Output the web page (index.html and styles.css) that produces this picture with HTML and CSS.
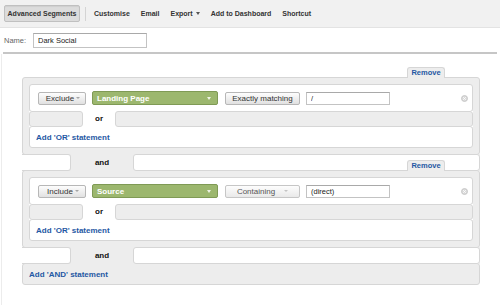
FILE: index.html
```html
<!DOCTYPE html>
<html lang="en">
<head>
    <meta charset="UTF-8">
    <meta name="viewport" content="width=device-width, initial-scale=1.0">
    <title>Advanced Segments - Dark Social</title>
    <link rel="stylesheet" href="styles.css">
</head>
<body>
    <div class="toolbar">
        <span class="tb-active">Advanced Segments</span>
        <span class="tb-sep"></span>
        <span class="tb-item first">Customise</span>
        <span class="tb-item">Email</span>
        <span class="tb-item">Export <i class="tb-caret"></i></span>
        <span class="tb-item">Add to Dashboard</span>
        <span class="tb-item">Shortcut</span>
    </div>

    <div class="name-row">
        <label for="segName">Name:</label>
        <input type="text" id="segName" class="name-input" value="Dark Social">
    </div>

    <div class="builder">
        <!-- first AND block -->
        <div class="segment">
            <a class="remove" href="#">Remove</a>
            <div class="cond">
                <span class="sel">Exclude<i class="caret"></i></span>
                <span class="dim">Landing Page<i class="caret white"></i></span>
                <span class="match">Exactly matching</span>
                <input type="text" class="val" value="/">
                <svg class="close" width="7" height="7" viewBox="0 0 7 7">
                    <circle cx="3.5" cy="3.5" r="3" fill="#d9d9d9" stroke="#c2c2c2" stroke-width="0.8"/>
                    <path d="M2.2 2.2 L4.8 4.8 M4.8 2.2 L2.2 4.8" stroke="#fff" stroke-width="0.9"/>
                </svg>
            </div>
            <div class="or-row">
                <span class="or-side left"></span>
                <span class="or-mid">or</span>
                <span class="or-side right"></span>
            </div>
            <div class="add-box"><a href="#">Add 'OR' statement</a></div>
        </div>

        <div class="and-row">
            <span class="and-side left"></span>
            <span class="and-mid">and</span>
            <span class="and-side right"></span>
        </div>

        <!-- second AND block -->
        <div class="segment">
            <a class="remove" href="#">Remove</a>
            <div class="cond">
                <span class="sel">Include<i class="caret"></i></span>
                <span class="dim">Source<i class="caret white"></i></span>
                <span class="match disabled">Containing<i class="caret light"></i></span>
                <input type="text" class="val" value="(direct)">
                <svg class="close" width="7" height="7" viewBox="0 0 7 7">
                    <circle cx="3.5" cy="3.5" r="3" fill="#d9d9d9" stroke="#c2c2c2" stroke-width="0.8"/>
                    <path d="M2.2 2.2 L4.8 4.8 M4.8 2.2 L2.2 4.8" stroke="#fff" stroke-width="0.9"/>
                </svg>
            </div>
            <div class="or-row">
                <span class="or-side left"></span>
                <span class="or-mid">or</span>
                <span class="or-side right"></span>
            </div>
            <div class="add-box"><a href="#">Add 'OR' statement</a></div>
        </div>

        <div class="and-row">
            <span class="and-side left"></span>
            <span class="and-mid">and</span>
            <span class="and-side right"></span>
        </div>

        <div class="add-and"><a href="#">Add 'AND' statement</a></div>
    </div>
</body>
</html>
```

FILE: styles.css
```css
* {
    margin: 0;
    padding: 0;
    box-sizing: border-box;
}
body {
    font-family: "Liberation Sans", Arial, sans-serif;
    background: #fff;
    color: #333;
}
a {
    color: #1f58a3;
    text-decoration: none;
    font-weight: bold;
}

/* toolbar */
.toolbar {
    display: flex;
    align-items: center;
    height: 28px;
    padding: 0 4px;
    background: #f1f1f1;
    border-bottom: 1px solid #e3e3e3;
    font-size: 7px;
    font-weight: bold;
    color: #333;
}
.tb-active {
    display: flex;
    align-items: center;
    justify-content: center;
    width: 76px;
    height: 17px;
    background: #dcdcdc;
    border: 1px solid #c0c0c0;
    border-radius: 2px;
    box-shadow: inset 0 1px 1px rgba(0, 0, 0, 0.06);
}
.tb-sep {
    width: 1px;
    height: 14px;
    margin-left: 5px;
    background: #d4d4d4;
}
.tb-item {
    margin-left: 11px;
    display: flex;
    align-items: center;
}
.tb-item.first {
    margin-left: 8px;
}
.tb-caret {
    display: inline-block;
    margin-left: 3px;
    border-top: 3px solid #555;
    border-left: 2px solid transparent;
    border-right: 2px solid transparent;
}

/* name */
.name-row {
    display: flex;
    align-items: center;
    margin: 0 3px;
    padding: 5px 1px 4px;
    border-bottom: 2px solid #c6c6c6;
}
.name-row label {
    width: 29px;
    font-size: 7.5px;
    color: #666;
}
.name-input {
    width: 114px;
    height: 15px;
    padding: 0 4px;
    border: 1px solid #c3c3c3;
    border-top-color: #a9a9a9;
    font-family: inherit;
    font-size: 7.5px;
    color: #222;
}

/* builder */
.builder {
    margin-left: 1px;
    border-left: 1px solid #ececec;
    padding: 23px 20px 20px 20px;
    min-height: 251px;
}
.segment {
    position: relative;
    background: #ededed;
    border: 1px solid #d6d6d6;
    border-radius: 3px;
    padding: 6px;
}
.remove {
    position: absolute;
    top: -11px;
    right: 34px;
    z-index: 2;
    width: 38px;
    height: 11px;
    background: #ededed;
    border: 1px solid #d6d6d6;
    border-bottom: none;
    border-radius: 3px 3px 0 0;
    font-size: 7.5px;
    line-height: 10px;
    text-align: center;
}
.cond {
    display: flex;
    align-items: center;
    height: 28px;
    padding: 0 4px 0 8px;
    background: #fff;
    border: 1px solid #d6d6d6;
    border-radius: 3px;
    font-size: 8px;
}
.sel,
.match {
    display: flex;
    align-items: center;
    justify-content: center;
    height: 13px;
    border: 1px solid #b7b7b7;
    border-radius: 2px;
    background: linear-gradient(#fdfdfd, #e1e1e1);
    color: #333;
}
.sel {
    width: 48px;
    padding-left: 2px;
}
.match {
    width: 75px;
    margin-left: 7px;
}
.match.disabled {
    color: #555;
    background: linear-gradient(#fdfdfd, #e9e9e9);
    border-color: #c6c6c6;
}
.caret {
    display: inline-block;
    margin-left: 2px;
    border-top: 2px solid #a5a5a5;
    border-left: 2px solid transparent;
    border-right: 2px solid transparent;
}
.caret.white {
    border-top: 3px solid #eef3e4;
    border-left-width: 2.5px;
    border-right-width: 2.5px;
}
.caret.light {
    margin-left: 9px;
    border-top-color: #c4c4c4;
}
.dim {
    display: flex;
    align-items: center;
    justify-content: space-between;
    width: 126px;
    height: 14px;
    margin-left: 6px;
    padding: 0 6px 0 4px;
    background: #9cb76e;
    border: 1px solid #7f9a55;
    border-radius: 2px;
    color: #fff;
    font-weight: bold;
}
.val {
    width: 84px;
    height: 13px;
    margin-left: 6px;
    padding: 0 4px;
    border: 1px solid #c3c3c3;
    border-top-color: #a9a9a9;
    font-family: inherit;
    font-size: 7.5px;
    color: #222;
}
.close {
    margin-left: auto;
}

/* or connector */
.or-row {
    position: relative;
    display: flex;
    height: 16px;
    margin: -1px 0;
    background: #fff;
}
.or-side {
    background: #ededed;
    border: 1px solid #d6d6d6;
    border-radius: 3px;
}
.or-side.left {
    width: 54px;
}
.or-side.right {
    flex: 1;
}
.or-mid {
    width: 32px;
    font-size: 8px;
    font-weight: bold;
    color: #111;
    text-align: center;
    line-height: 16px;
}
.add-box {
    display: flex;
    align-items: center;
    height: 22px;
    padding-left: 6px;
    background: #fff;
    border: 1px solid #d6d6d6;
    border-radius: 3px;
    font-size: 8px;
}

/* and connector */
.and-row {
    position: relative;
    z-index: 1;
    display: flex;
    height: 17px;
    margin: -1px 0;
    background: #ededed;
}
.and-side {
    background: #fff;
    border: 1px solid #d6d6d6;
    border-radius: 3px;
}
.and-side.left {
    width: 49px;
    border-left: none;
    border-radius: 0 3px 3px 0;
}
.and-side.right {
    flex: 1;
}
.and-mid {
    width: 62px;
    font-size: 8px;
    font-weight: bold;
    color: #111;
    text-align: center;
    line-height: 17px;
}
.add-and {
    display: flex;
    align-items: center;
    height: 22px;
    padding-left: 6px;
    background: #ededed;
    border: 1px solid #d6d6d6;
    border-radius: 3px;
    font-size: 8px;
}
```
